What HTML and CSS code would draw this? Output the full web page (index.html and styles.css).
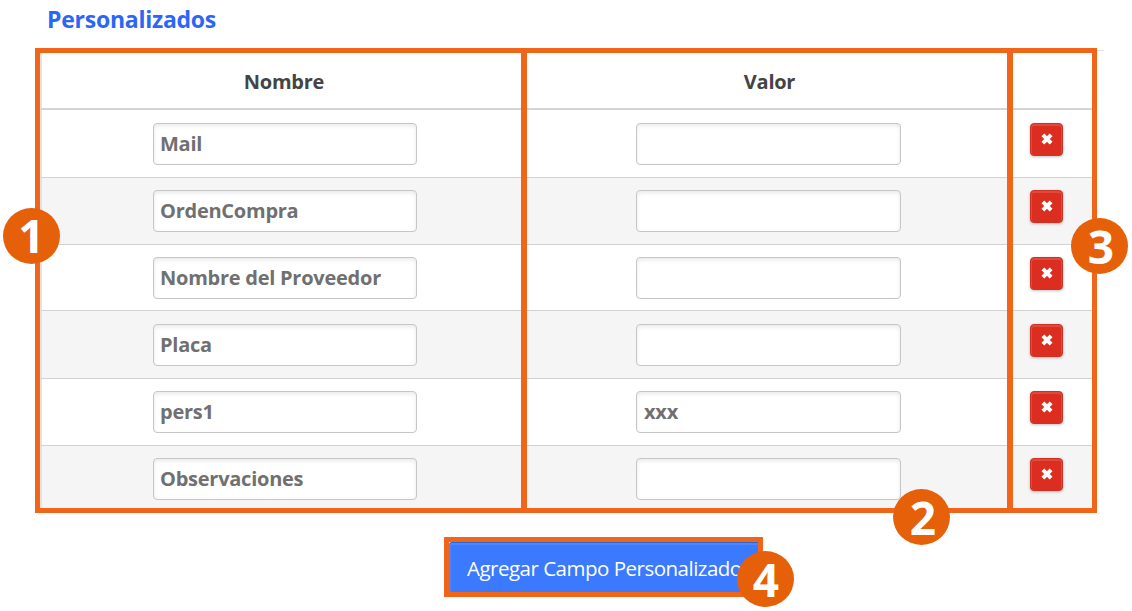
FILE: index.html
```html
<!DOCTYPE html>
<html lang="es">
  <head>
    <meta charset="utf-8">
    <title>Personalizados</title>
    <link rel="stylesheet" href="styles.css">
  </head>
  <body>
    <svg class="sprite">
      <symbol id="remove" viewBox="0 0 12 12">
        <path d="M1.9 1.9 10.1 10.1M10.1 1.9 1.9 10.1" stroke="#fff" stroke-width="4" />
      </symbol>
    </svg>

    <h2>Personalizados</h2>

    <div class="fields">
      <div class="row head">
        <div class="cell">Nombre</div>
        <div class="cell">Valor</div>
        <div class="cell"></div>
      </div>
      <div class="row">
        <div class="cell"><input type="text" value="Mail"></div>
        <div class="cell"><input type="text"></div>
        <div class="cell"><button class="remove"><svg><use href="#remove" /></svg></button></div>
      </div>
      <div class="row">
        <div class="cell"><input type="text" value="OrdenCompra"></div>
        <div class="cell"><input type="text"></div>
        <div class="cell"><button class="remove"><svg><use href="#remove" /></svg></button></div>
      </div>
      <div class="row">
        <div class="cell"><input type="text" value="Nombre del Proveedor"></div>
        <div class="cell"><input type="text"></div>
        <div class="cell"><button class="remove"><svg><use href="#remove" /></svg></button></div>
      </div>
      <div class="row">
        <div class="cell"><input type="text" value="Placa"></div>
        <div class="cell"><input type="text"></div>
        <div class="cell"><button class="remove"><svg><use href="#remove" /></svg></button></div>
      </div>
      <div class="row">
        <div class="cell"><input type="text" value="pers1"></div>
        <div class="cell"><input type="text" value="xxx"></div>
        <div class="cell"><button class="remove"><svg><use href="#remove" /></svg></button></div>
      </div>
      <div class="row">
        <div class="cell"><input type="text" value="Observaciones"></div>
        <div class="cell"><input type="text"></div>
        <div class="cell"><button class="remove"><svg><use href="#remove" /></svg></button></div>
      </div>

      <span class="step step-1">1</span>
      <span class="step step-2">2</span>
      <span class="step step-3">3</span>
    </div>

    <div class="add">
      <button class="add-button">Agregar Campo Personalizado</button>
      <span class="step step-4">4</span>
    </div>
  </body>
</html>
```
FILE: styles.css
```css
html, body {
    height: 100%;
}

body {
    margin: 0;
    overflow: hidden;

    font-family: "Open Sans", "Noto Sans", sans-serif;
    font-size: 20px;
    color: #444;

    background: #fff;
}

.sprite {
    position: absolute;
    width: 0;
    height: 0;
}

h2 {
    height: 48px;
    margin: 0;
    padding-left: 47px;

    font-size: 23px;
    font-weight: 700;
    line-height: 38px;
    letter-spacing: -.25px;
    color: #2b66f6;

    box-sizing: border-box;
}

/* orange frame around the table */
.fields {
    position: relative;
    box-sizing: border-box;
    width: 1062px;
    height: 465px;
    margin-left: 35px;

    border: 5.5px solid #f0651a;
}

/* faint end of the table's top border */
.fields::after {
    content: "";
    position: absolute;
    top: -3px;
    right: -12px;
    width: 7px;
    height: 1px;
    background: #e4e4e4;
}

.row {
    box-sizing: border-box;
    height: 67px;

    display: grid;
    grid-template-columns: 481px 480px 1fr;
    column-gap: 6px;

    background: #f0651a;
}

.row:nth-child(2) { height: 68px; }
.row:nth-child(4) { height: 66px; }
.row:nth-child(5) { height: 68px; }
.row:nth-child(7) { height: 62px; }

.cell {
    box-sizing: border-box;
    padding-top: 13px;

    border-bottom: 1px solid #d2d2d2;

    background: #fff;
}

.row:nth-child(n+3) .cell {
    padding-top: 12px;
}

.row:nth-child(5) .cell {
    padding-top: 13px;
}

.cell:first-child {
    padding-left: 111px;
    border-left: 2px solid #e2e2e2;
}

.cell:nth-child(2) {
    padding-left: 109px;
}

.cell:nth-child(3) {
    padding-left: 17px;
}

.row:nth-child(odd) .cell {
    background: #f5f5f5;
}

.row:last-of-type .cell {
    border-bottom: 0;
}

.head {
    height: 57px;
}

.row.head .cell {
    padding: 2px 0 0 5px;

    border-bottom: 2px solid #d4d4d4;

    font-weight: 700;
    line-height: 53px;
    letter-spacing: -.25px;
    text-align: center;

    background: #fff;
}

input {
    display: block;
    box-sizing: border-box;
    width: 264px;
    height: 42px;
    padding: 0 6px 2px;

    border: 1.5px solid #c6c6c6;
    border-radius: 4px;
    outline: 0;

    font-family: inherit;
    font-size: 20px;
    font-weight: 700;
    letter-spacing: -.25px;
    color: #707070;

    background: #fff;
    box-shadow: inset 0 2px 4px rgba(0, 0, 0, .09);
}

.cell:nth-child(2) input {
    width: 265px;
    padding-left: 7px;
}

.remove {
    display: flex;
    justify-content: center;
    align-items: center;
    width: 33px;
    height: 33px;
    padding: 0 0 1px;

    border: 1px solid #cc3327;
    border-radius: 4px;

    background: #dc2e20;
    box-shadow: inset 0 1px 0 1px rgba(255, 255, 255, .13), 0 1px 3px rgba(0, 0, 0, .25);
}

.remove svg {
    width: 12px;
    height: 12px;
}

.add {
    position: relative;
    box-sizing: border-box;
    width: 319px;
    height: 60px;
    margin: 24px 0 0 444px;

    border: 5.5px solid #f0651a;
}

.add-button {
    display: block;
    width: 100%;
    height: 100%;
    padding: 1px 0 0 18px;

    border: 0;
    border-top: 1px solid #2f68cc;
    border-radius: 3px 0 0 0;

    font-family: inherit;
    font-size: 20.5px;
    letter-spacing: -.5px;
    text-align: left;
    white-space: nowrap;
    color: #fff;

    background: #3b79ff;
    box-shadow: inset 1px 1px 0 1px rgba(255, 255, 255, .1);
}

/* numbered callouts over the frames */
.step {
    position: absolute;
    z-index: 1;
    box-sizing: border-box;
    width: 57px;
    height: 56px;

    border-radius: 50%;

    font-family: "Open Sans", sans-serif;
    font-size: 46px;
    font-weight: 700;
    line-height: 56px;
    text-align: center;
    color: #fff;

    background: #e66009;
}

.step-1 { left: -37px; top: 155px; line-height: 55px; }
.step-2 { left: 853px; top: 436px; padding-left: 3px; }
.step-3 { left: 1031px; top: 165px; padding-left: 3px; }
.step-4 { left: 288px; top: 9px; padding-left: 1px; }
```
